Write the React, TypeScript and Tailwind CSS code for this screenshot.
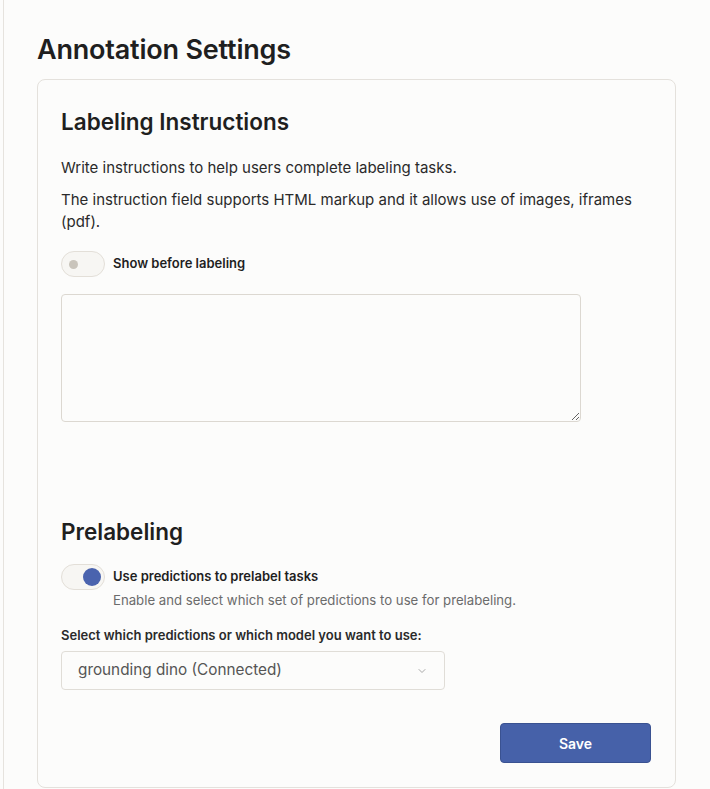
import { ChevronDown } from "lucide-react";

const Toggle = ({ on }: { on: boolean }) => {
    return <div className="relative w-[44px] h-[26px] rounded-full border border-[#e3dfd8] bg-[#f7f6f3] shrink-0">
        {on
            ? <div className="absolute right-[3px] top-[3px] w-[18px] h-[18px] rounded-full bg-[#4a63ae]" />
            : <div className="absolute left-[7px] top-[8px] w-[9px] h-[9px] rounded-full bg-[#c9c4bb]" />}
    </div>
}

export default function App() {
    return <div className="min-h-[789px] bg-[#fcfcfb] text-[#1f1f1f]" style={{ fontFamily: "Inter, 'Noto Sans', sans-serif" }}>
        <div className="ml-[3px] border-l border-[#e6e3de] min-h-[789px] pl-[33px] pr-[34px] pt-[33px]">
            <h1 className="text-[27px] font-semibold tracking-[-0.2px] leading-[34px] mb-[12px]">Annotation Settings</h1>
            <div className="border border-[#e4e1dc] rounded-lg bg-[#fcfcfb] pl-[23px] pr-6 pt-[27px] pb-6">
                <h2 className="text-[22.5px] font-semibold leading-[30px] mb-[20px]">Labeling Instructions</h2>
                <p className="text-[15px] leading-[22px] text-[#2a2a2a] mb-[10px]">Write instructions to help users complete labeling tasks.</p>
                <p className="text-[15px] leading-[22px] text-[#2a2a2a] pr-2">The instruction field supports HTML markup and it allows use of images, iframes (pdf).</p>
                <div className="flex items-center gap-2 mt-[18px]">
                    <Toggle on={false} />
                    <span className="text-[13px] font-semibold">Show before labeling</span>
                </div>
                <textarea className="block mt-[17px] w-[520px] h-[128px] border border-[#dcd8d1] rounded bg-[#fcfcfb] outline-none" />
                <h2 className="text-[22.5px] font-semibold leading-[30px] mt-[95px] mb-[17px]">Prelabeling</h2>
                <div className="flex gap-2">
                    <Toggle on={true} />
                    <div className="pt-[3px]">
                        <div className="text-[13px] font-semibold leading-[18px]">Use predictions to prelabel tasks</div>
                        <div className="text-[13.2px] text-[#6b6b6b] leading-[18px] mt-[6px]">Enable and select which set of predictions to use for prelabeling.</div>
                    </div>
                </div>
                <div className="text-[13px] font-semibold leading-[18px] mt-[17px] text-[#2a2a2a]">Select which predictions or which model you want to use:</div>
                <div className="mt-[7px] w-[384px] h-[39px] border border-[#e0ddd7] rounded flex items-center justify-between px-4 bg-[#fcfcfb]">
                    <span className="text-[15.3px] text-[#555]">grounding dino (Connected)</span>
                    <ChevronDown size={12} className="text-[#a8a8a8]" />
                </div>
                <div className="flex justify-end mt-[33px]">
                    <button className="w-[151px] h-[40px] rounded bg-[#4661a9] border border-[#3a5291] text-white text-[14px] font-semibold">Save</button>
                </div>
            </div>
        </div>
    </div>
}
